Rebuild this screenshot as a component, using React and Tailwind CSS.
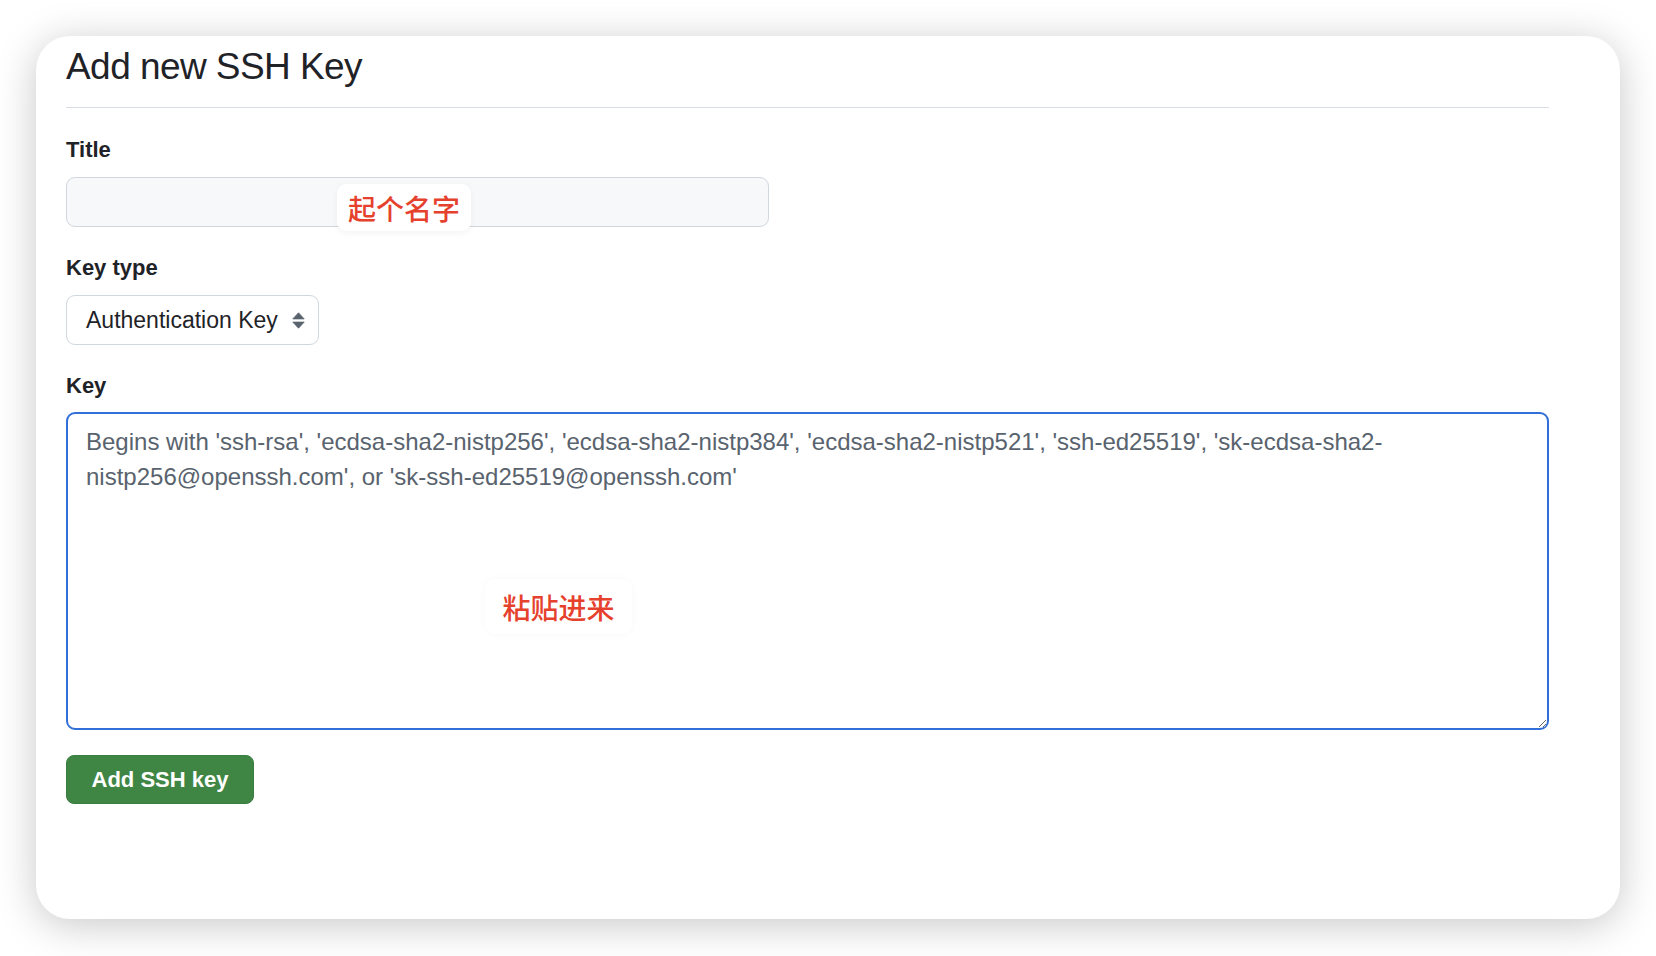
import React from "react";

const FONT = { fontFamily: '"Liberation Sans", Arial, "Noto Sans CJK SC", sans-serif' };
const CJK = { fontFamily: '"Noto Sans CJK SC", "Noto Sans", sans-serif' };

function UpDown() {
  return (
    <svg width="13" height="17" viewBox="0 0 13 17" className="shrink-0">
      <path d="M6.5 0.8 L12.2 6.9 H0.8 Z" fill="#59636e" stroke="#59636e" strokeWidth="0.8" strokeLinejoin="round" />
      <path d="M0.8 10.1 H12.2 L6.5 16.2 Z" fill="#59636e" stroke="#59636e" strokeWidth="0.8" strokeLinejoin="round" />
    </svg>
  );
}

export default function App() {
  return (
    <div className="w-[1656px] h-[956px] bg-white pl-[36px] pt-[36px] overflow-hidden" style={FONT}>
      <div className="w-[1584px] h-[883px] bg-white rounded-[34px] shadow-[0_6px_40px_rgba(0,0,0,0.22)] pl-[30px] pt-[9px] text-[#1f2328]">
        <div className="w-[1483px]">
          <div className="border-b border-[#d8dee4] pb-[18px]">
            <h2 className="text-[37px] leading-[44px] font-normal tracking-[-0.015em]">Add new SSH Key</h2>
          </div>

          <div className="mt-[27px] text-[22px] leading-[30px] font-bold">Title</div>
          <div className="relative mt-[12px] w-[703px]">
            <input
              type="text"
              className="block w-[703px] h-[50px] border border-[#d0d7de] bg-[#f6f8fa] rounded-[9px] outline-none px-[19px] text-[23px]"
            />
            <div
              className="absolute left-[271px] top-[7px] w-[134px] h-[47px] bg-white rounded-[9px] shadow-[0_2px_6px_rgba(0,0,0,0.05)] flex items-center justify-center text-[28px] font-medium text-[#e5412d]"
              style={CJK}
            >
              起个名字
            </div>
          </div>

          <div className="mt-[26px] text-[22px] leading-[30px] font-bold">Key type</div>
          <div className="mt-[12px] w-[253px] h-[50px] border border-[#d0d7de] bg-white rounded-[9px] flex items-center justify-between pl-[19px] pr-[13px]">
            <span className="text-[23px] text-[#1f2328]">Authentication Key</span>
            <UpDown />
          </div>

          <div className="mt-[26px] text-[22px] leading-[30px] font-bold">Key</div>
          <div className="relative mt-[11px]">
            <textarea
              className="block w-[1483px] h-[318px] border-2 border-[#326fd9] rounded-[9px] pt-[10px] px-[18px] text-[24px] leading-[35px] text-[#1f2328] placeholder:text-[#59636e] outline-none bg-white"
              style={FONT}
              placeholder="Begins with 'ssh-rsa', 'ecdsa-sha2-nistp256', 'ecdsa-sha2-nistp384', 'ecdsa-sha2-nistp521', 'ssh-ed25519', 'sk-ecdsa-sha2-nistp256@openssh.com', or 'sk-ssh-ed25519@openssh.com'"
            />
            <div
              className="absolute left-[419px] top-[167px] w-[147px] h-[55px] bg-white rounded-[10px] shadow-[0_0_8px_rgba(0,0,0,0.03)] flex items-center justify-center text-[28px] font-medium text-[#e5412d]"
              style={CJK}
            >
              粘贴进来
            </div>
          </div>

          <button className="mt-[25px] w-[188px] h-[49px] rounded-[8px] bg-[#3f8645] border border-[#3a7d40] text-white text-[22px] font-bold flex items-center justify-center">
            Add SSH key
          </button>
        </div>
      </div>
    </div>
  );
}
